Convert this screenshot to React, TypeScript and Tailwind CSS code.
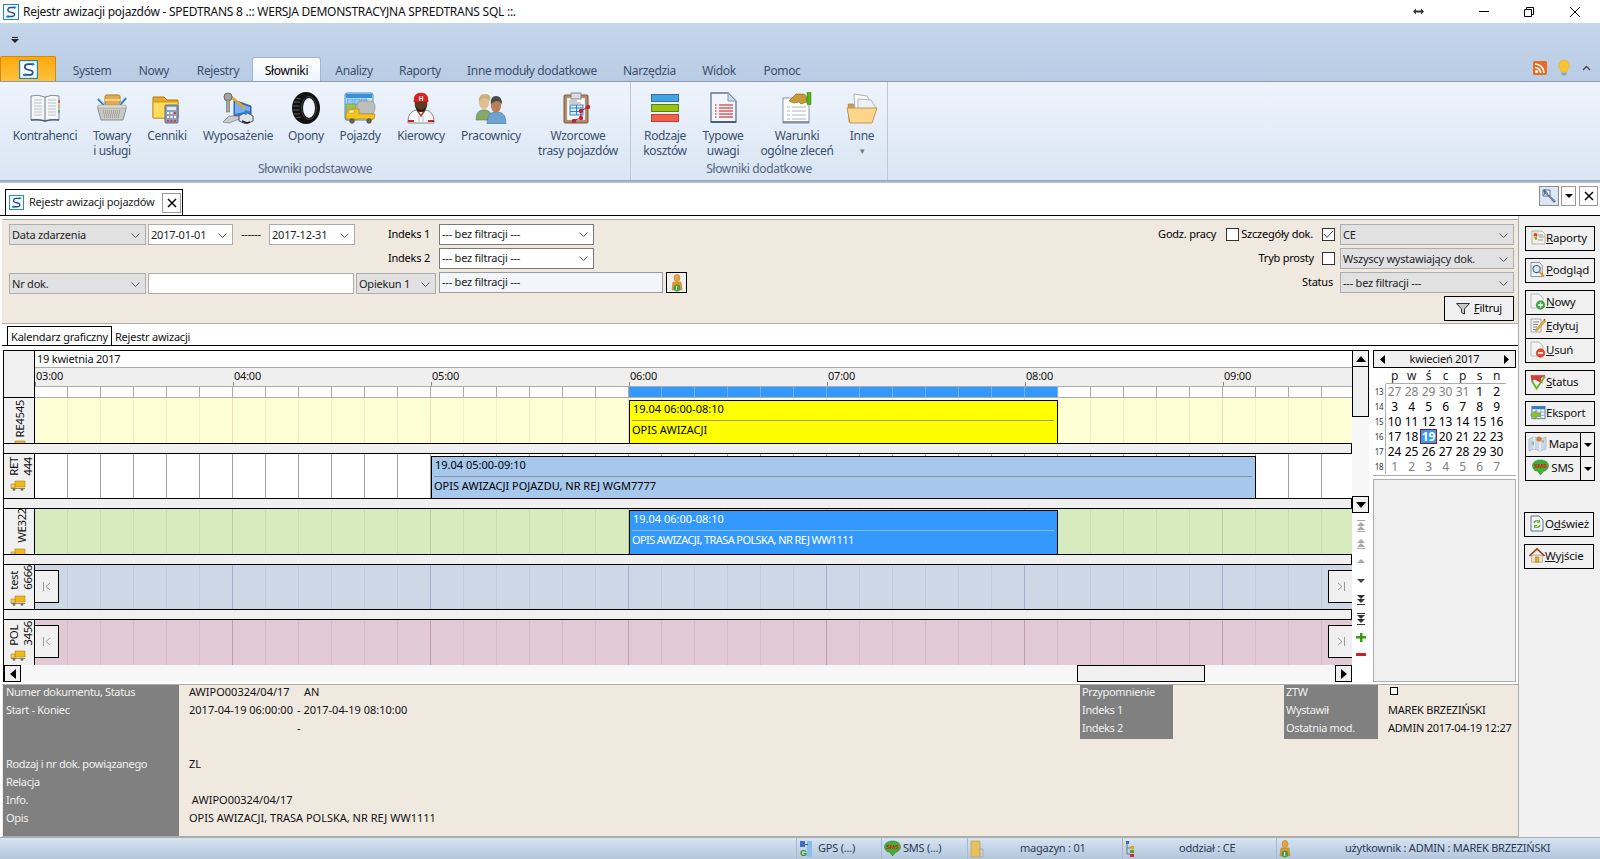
import type { ReactNode } from 'react';

// --- ikony ---
const LogoS = ({ size = 16 }: { size?: number }) => (
  <svg width={size} height={size} viewBox="0 0 16 16" className="shrink-0">
    <rect x="0.5" y="0.5" width="15" height="15" fill="#f4fafe" stroke="#1c86c6" />
    <path d="M12.5 3.5H7.5C4.5 3.5 4 7 6.5 7.8l3.5 1c2.5 .7 2 3.7-1 3.7H3.5" fill="none" stroke="#234f8c" strokeWidth="1.4" />
    <path d="M11 2l2.5 1.5L11 5zM5.5 11L3 12.5 5.5 14z" fill="#1c86c6" />
  </svg>
);

const BookIcon = () => (
  <svg width="32" height="32" viewBox="0 0 32 32">
    <path d="M2 4q7-2 14 1q7-3 14-1v24q-7-1-14 1q-7-2-14-1z" fill="#f4f6f8" stroke="#7f8ea0" />
    <path d="M16 5v24" stroke="#6f7d8d" />
    <path d="M5 8h8M5 11h8M5 14h8M5 17h8M5 20h8M5 23h8M19 8h8M19 11h8M19 14h8M19 17h8M19 20h8M19 23h8" stroke="#b9c1ca" />
    <path d="M30 8v3" stroke="#d9534f" strokeWidth="1.5" />
    <path d="M30 13v3" stroke="#e0b030" strokeWidth="1.5" />
    <path d="M30 18v3" stroke="#66a63a" strokeWidth="1.5" />
    <path d="M2 28q7-1 14 1q7-2 14-1" fill="none" stroke="#4e6278" strokeWidth="1.5" />
  </svg>
);

const BasketIcon = () => (
  <svg width="32" height="32" viewBox="0 0 32 32">
    <rect x="9" y="3" width="15" height="11" rx="1.5" fill="#e7a94a" stroke="#b37b2a" />
    <rect x="9" y="7" width="15" height="2" fill="#f6d792" />
    <path d="M2 7l8 8M30 6l-8 9" stroke="#2a7fd0" strokeWidth="2.4" />
    <path d="M3 7l8 8M29 6l-8 9" stroke="#bfe0f8" strokeWidth="0.7" />
    <path d="M2 14h28v3l-3 11H5L2 17z" fill="#c8c8c4" stroke="#8d8d88" />
    <rect x="2" y="13" width="28" height="3" rx="1" fill="#dededa" stroke="#9a9a95" strokeWidth="0.6" />
    <path d="M7 19h18M7 21h18M8 23h16M8 25h16" stroke="#85857f" strokeDasharray="1 1" />
  </svg>
);

const FolderCalcIcon = () => (
  <svg width="32" height="32" viewBox="0 0 32 32">
    <path d="M2 5h11l3 3h11v18H2z" fill="#e8a81f" stroke="#b07d16" />
    <path d="M2 10h25v16H3q-1 0-1-1z" fill="#ffdc5e" stroke="#c79a26" />
    <rect x="14" y="13" width="13" height="18" rx="1" fill="#8f9fb7" stroke="#5e6e88" />
    <rect x="16" y="15" width="9" height="3" fill="#dfe9f7" />
    <path d="M16 20h2v2h-2zM19.5 20h2v2h-2zM16 24h2v2h-2zM19.5 24h2v2h-2zM23 24h2v2h-2z" fill="#fff" />
    <path d="M23 20h2v2h-2zM16 28h2v2h-2zM19.5 28h2v2h-2zM23 28h2v2h-2z" fill="#d24040" />
  </svg>
);

const EquipIcon = () => (
  <svg width="32" height="32" viewBox="0 0 32 32">
    <path d="M12 8l17 6v12H12z" fill="#2f6fd6" stroke="#3b5f9f" />
    <path d="M13 10l15 5v4l-15 3z" fill="#79aef0" />
    <path d="M8 4l15 12" stroke="#e6a52a" strokeWidth="2.6" />
    <circle cx="6" cy="5" r="4" fill="#a6a6a0" stroke="#6a6a65" />
    <rect x="4.5" y="8" width="3" height="12" fill="#a6a6a0" stroke="#6a6a65" strokeWidth="0.6" />
    <path d="M1 30l6-6h10v3l-10 4z" fill="#c8cbd0" stroke="#6a6a65" strokeWidth="0.6" />
    <path d="M17 24l7-4 7 4v5l-7 3-7-3z" fill="#dfe3e8" stroke="#555" />
    <path d="M20 21l4-3 3 2-3 3z" fill="#2f7fd6" />
    <path d="M20 29l5 2 3-1" stroke="#222" strokeWidth="1.4" fill="none" />
  </svg>
);

const TireIcon = () => (
  <svg width="32" height="32" viewBox="0 0 32 32">
    <ellipse cx="16" cy="16" rx="14" ry="16" fill="#111" />
    <ellipse cx="19" cy="16" rx="6" ry="10" fill="#f0f5fb" />
    <ellipse cx="19" cy="16" rx="7.5" ry="11.5" fill="none" stroke="#444" />
    <path d="M3 10h7M2.5 14h7M2.5 18h7M3 22h7M5 6l6 1M5 26l6-1" stroke="#5c5c5c" />
  </svg>
);

const VehicleIcon = () => (
  <svg width="32" height="32" viewBox="0 0 32 32">
    <rect x="1" y="1" width="28" height="27" rx="2" fill="#cfe6f7" stroke="#3c8fd2" />
    <path d="M2 2h26v4H2z" fill="#3c8fd2" />
    <path d="M3 7h6v6H3zM10 7h6v6h-6zM17 7h6v6h-6z" fill="#8fc8f0" stroke="#3c8fd2" strokeWidth="0.5" />
    <rect x="2" y="12" width="10" height="16" fill="#9dc45a" stroke="#6d8f33" strokeWidth="0.6" />
    <rect x="13" y="9" width="18" height="13" rx="5" fill="#bdbdbb" stroke="#8c8c8a" strokeWidth="0.6" />
    <path d="M10 17h5v5h16l-1 5H2v-6l3-4z" fill="#f6c21c" stroke="#b98b10" strokeWidth="0.7" />
    <path d="M4 21l2-3h4v3z" fill="#fff3c0" stroke="#b98b10" strokeWidth="0.5" />
    <circle cx="8" cy="29" r="2.3" fill="#666" stroke="#333" strokeWidth="0.6" />
    <circle cx="25" cy="29" r="2.3" fill="#666" stroke="#333" strokeWidth="0.6" />
  </svg>
);

const DriverIcon = () => (
  <svg width="32" height="32" viewBox="0 0 32 32">
    <path d="M3 29q0-9 8-11h10q8 2 8 11v2H3z" fill="#fafafa" stroke="#8b8b8b" />
    <path d="M3 28h6v2H3zM23 28h6v2h-6z" fill="#c9261e" />
    <path d="M12 18l4 6 4-6" fill="none" stroke="#9c3a32" strokeWidth="1.4" />
    <path d="M14 24v6M18 24v6" stroke="#bbb" />
    <ellipse cx="16" cy="12" rx="6.4" ry="7.5" fill="#5b3a26" />
    <path d="M11 15q5 6 10 0q0 5-5 5t-5-5z" fill="#2a1a10" />
    <path d="M9 8q0-7 7-7t7 7v2H9z" fill="#dd1f1f" stroke="#a21212" strokeWidth="0.5" />
    <text x="16" y="8.5" textAnchor="middle" fontSize="6.5" fontWeight="700" fill="#fff" fontFamily="'Liberation Sans',sans-serif">H</text>
  </svg>
);

const PeopleIcon = () => (
  <svg width="32" height="32" viewBox="0 0 32 32">
    <path d="M1 28q0-9 6-10h4q6 1 6 10z" fill="#86a86b" stroke="#5f7d4c" strokeWidth="0.6" />
    <ellipse cx="9" cy="10" rx="5.2" ry="7" fill="#e0c090" />
    <path d="M4 10q-1-8 6-8t5 7q-3-3-6-3t-5 4z" fill="#c7b27a" />
    <path d="M12 32q0-11 7-12h5q7 1 7 12z" fill="#6ea3d0" stroke="#4a779d" strokeWidth="0.6" />
    <ellipse cx="21" cy="13" rx="5.2" ry="7.4" fill="#b78155" />
    <path d="M16 12q-1-8 5-8t6 8q-3-3-5-3t-6 3z" fill="#4a4a48" />
  </svg>
);

const ClipboardIcon = () => (
  <svg width="32" height="32" viewBox="0 0 32 32">
    <rect x="2" y="3" width="24" height="28" rx="1" fill="#b08862" stroke="#7b5a3c" />
    <rect x="5" y="6" width="18" height="22" fill="#fff" stroke="#bbb" strokeWidth="0.5" />
    <rect x="9" y="1" width="10" height="6" fill="#d9dde2" stroke="#7f8790" />
    <path d="M7 9h8M7 11h12" stroke="#999" />
    <rect x="8" y="13" width="13" height="10" fill="#dcecf9" stroke="#2d81cd" />
    <path d="M8 16h13M8 19.5h13M14.5 13v10" stroke="#2d81cd" />
    <path d="M26 15l-7 4M19 19v7M19 26l-6 2" stroke="#8a2a4a" />
    <circle cx="26" cy="15" r="2.2" fill="#c91f38" />
    <circle cx="19" cy="19" r="2.2" fill="#c91f38" />
    <circle cx="19" cy="26" r="2.2" fill="#c91f38" />
    <circle cx="12" cy="29" r="2.2" fill="#c91f38" />
  </svg>
);

const BarsIcon = () => (
  <svg width="32" height="32" viewBox="0 0 32 32">
    <rect x="2.5" y="2.5" width="27" height="7" fill="#41a4e6" stroke="#3b6ea0" />
    <rect x="2.5" y="12.5" width="27" height="7" fill="#9bc411" stroke="#5e7f17" />
    <rect x="2.5" y="22.5" width="27" height="7" fill="#f2604a" stroke="#b64435" />
  </svg>
);

const DocLinesIcon = () => (
  <svg width="32" height="32" viewBox="0 0 32 32">
    <path d="M4 1h17l8 8v21H4z" fill="#f2f5f9" stroke="#5d7591" strokeWidth="1.3" />
    <path d="M21 1v8h8z" fill="#cfd8e3" stroke="#8097af" />
    <path d="M4 30h25" stroke="#4b5f78" strokeWidth="2" />
    <path d="M12 13h14M12 16h14M12 19h14M12 22h14M12 25h14" stroke="#c61010" />
    <path d="M8 13h2M8 16h2M8 19h2M8 22h2M8 25h2" stroke="#c61010" strokeDasharray="1 0.5" />
  </svg>
);

const TermsIcon = () => (
  <svg width="32" height="32" viewBox="0 0 32 32">
    <rect x="2" y="6" width="26" height="25" fill="#fff" stroke="#8397ad" />
    <path d="M2 30h26" stroke="#66788f" strokeWidth="1.5" />
    <path d="M6 15h3M11 15h14M6 19h3M11 19h14M6 23h3M11 23h14M6 27h3M11 27h14" stroke="#a9b6c6" />
    <path d="M8 9l7-7h8l2 2 1 6-6 2-2-2-5 1z" fill="#c89a35" stroke="#8a6516" strokeWidth="0.6" />
    <rect x="26" y="0.5" width="4" height="12" fill="#4fb51d" stroke="#2f7a0e" strokeWidth="0.5" />
  </svg>
);

const OpenFolderIcon = () => (
  <svg width="32" height="32" viewBox="0 0 32 32">
    <path d="M2 12h7V6h5l2 2v4h10v18H3z" fill="#c89a55" stroke="#a87c3d" strokeWidth="0.6" />
    <path d="M8 2l13 2 6 10-18 4z" fill="#fbfbfb" stroke="#a9afb6" />
    <path d="M12 7l13 1 5 8-18 2z" fill="#eef1f5" stroke="#b4b9c0" />
    <path d="M1 16h30l-5 15H4z" fill="#fbd58a" stroke="#c0975a" />
  </svg>
);

const Truck = () => (
  <svg width="16" height="11" viewBox="0 0 16 11" className="shrink-0">
    <path d="M5 1h10v6H5z" fill="#f0b919" stroke="#ad8210" strokeWidth="0.6" />
    <path d="M1 4h4v4H1z" fill="#f6cf4e" stroke="#ad8210" strokeWidth="0.6" />
    <path d="M1 8h14v1H1z" fill="#9b8a5a" />
    <circle cx="4" cy="9.5" r="1.4" fill="#777" />
    <circle cx="12" cy="9.5" r="1.4" fill="#777" />
  </svg>
);

const CloseX = () => (
  <svg width="10" height="10" viewBox="0 0 10 10">
    <path d="M1 1l8 8M9 1L1 9" stroke="#000" strokeWidth="1.5" />
  </svg>
);

const Chevron = ({ className = 'text-[#555]' }: { className?: string }) => (
  <svg width="9" height="5" viewBox="0 0 9 5" className={`shrink-0 ${className}`}>
    <path d="M0.5 0.5L4.5 4.5L8.5 0.5" fill="none" stroke="currentColor" />
  </svg>
);

const TriDown = () => (
  <svg width="8" height="4" viewBox="0 0 8 4" className="shrink-0">
    <path d="M0 0h8L4 4z" fill="#000" />
  </svg>
);

const Person = () => (
  <svg width="12" height="18" viewBox="0 0 12 18" className="shrink-0">
    <ellipse cx="6" cy="4" rx="3" ry="3.6" fill="#eaa33a" stroke="#b0741e" strokeWidth="0.5" />
    <path d="M2 8h8l1 8H1z" fill="#e5982f" stroke="#b0741e" strokeWidth="0.5" />
    <circle cx="6" cy="14" r="3.4" fill="#3fa33a" />
    <path d="M5.6 12v4" stroke="#fff" />
  </svg>
);

const SmsBubble = ({ size = 18 }: { size?: number }) => (
  <svg width={size} height={size} viewBox="0 0 18 18" className="shrink-0">
    <path d="M9 1c5 0 8.5 2.5 8.5 6s-3 6-5 6L9 17l-3-4c-3 0-5.5-2.500-5.5-6S4 1 9 1z" fill="#3fae3a" stroke="#2a7f26" strokeWidth="0.5" />
    <text x="9" y="9.5" textAnchor="middle" fontSize="6.5" fontWeight="700" fill="#e01414" fontFamily="'Liberation Sans',sans-serif">SMS</text>
  </svg>
);

const sideIcons: Record<string, ReactNode> = {
  raporty: (
    <svg width="15" height="15" viewBox="0 0 15 15">
      <path d="M1 1h10l3 3v10H1z" fill="#f4f1ea" stroke="#b3b0a6" />
      <path d="M7 5h5M8 7h5M7 10h5" stroke="#999" />
      <circle cx="4.5" cy="5" r="2" fill="#e33b2e" />
      <circle cx="4" cy="7" r="1.3" fill="#f2c030" />
      <circle cx="5" cy="8.5" r="1.3" fill="#5ab030" />
    </svg>
  ),
  podglad: (
    <svg width="17" height="17" viewBox="0 0 17 17">
      <path d="M1 1h9l3 3v12H1z" fill="#eef2f6" stroke="#7c8ea0" />
      <circle cx="7" cy="8" r="3.8" fill="#dbe9f5" stroke="#4b5f78" strokeWidth="1.2" />
      <path d="M10 11l5 5" stroke="#d99a2c" strokeWidth="2.2" />
    </svg>
  ),
  nowy: (
    <svg width="16" height="17" viewBox="0 0 16 17">
      <path d="M1 1h8l4 4v10H1z" fill="#f2f3f5" stroke="#b8bcc2" />
      <circle cx="10.5" cy="12" r="4.3" fill="#3fa33a" stroke="#2a7f26" strokeWidth="0.5" />
      <path d="M10.5 9.5v5M8 12h5" stroke="#fff" strokeWidth="1.4" />
    </svg>
  ),
  edytuj: (
    <svg width="16" height="17" viewBox="0 0 16 17">
      <path d="M1 2h10v13H1z" fill="#f2f3f5" stroke="#a8a8a8" />
      <path d="M3 5h6M3 7.5h5M3 10h4M3 12.5h3" stroke="#8a8a8a" />
      <path d="M6 12l8-9 1.5 1.5-8 9-2 .5z" fill="#e8b536" stroke="#9a7418" strokeWidth="0.5" />
      <path d="M13.5 3l1-1.500 1.200 1.500-1 1z" fill="#d83a30" />
    </svg>
  ),
  usun: (
    <svg width="16" height="17" viewBox="0 0 16 17">
      <path d="M1 1h8l4 4v10H1z" fill="#f2f3f5" stroke="#b8bcc2" />
      <circle cx="10.5" cy="12" r="4.3" fill="#e2492f" stroke="#a93320" strokeWidth="0.5" />
      <path d="M8 12h5" stroke="#fff" strokeWidth="1.6" />
    </svg>
  ),
  status: (
    <svg width="17" height="17" viewBox="0 0 17 17">
      <path d="M1 2l15 0-5 3 2 5-8-4-3 2z" fill="#d93a3a" stroke="#8f2020" strokeWidth="0.5" />
      <path d="M2 8l5 8 9-13" fill="none" stroke="#6ab42e" strokeWidth="2" />
    </svg>
  ),
  eksport: (
    <svg width="17" height="16" viewBox="0 0 17 16">
      <rect x="2" y="1" width="14" height="13" fill="#f2f6fb" stroke="#4a7ab2" />
      <path d="M2 1h14v3H2z" fill="#3a79c4" />
      <path d="M7 4v10M2 7h14M2 10.5h14M11.5 4v10" stroke="#8cb0d6" />
      <path d="M0.5 10L6 5.5V8h5v4H6v2.5z" fill="#90c12e" stroke="#5b8a14" strokeWidth="0.5" />
    </svg>
  ),
  mapa: (
    <svg width="19" height="17" viewBox="0 0 19 17">
      <path d="M1 4l5-2 6 2 6-2v12l-6 2-6-2-5 2z" fill="#c7d8e8" stroke="#95a8ba" strokeWidth="0.6" />
      <path d="M6 2v12M12 4v12" stroke="#fff" />
      <path d="M3 8l3-2v5zM13 6l3-1v3z" fill="#98b87a" />
      <circle cx="11" cy="4" r="2.6" fill="#d97a3a" />
    </svg>
  ),
  odswiez: (
    <svg width="14" height="17" viewBox="0 0 14 17">
      <path d="M1 1h8l4 4v11H1z" fill="#f2f5f9" stroke="#5d7591" />
      <path d="M4 8a3 3 0 0 1 5-1.5M10 10a3 3 0 0 1-5 1.5" fill="none" stroke="#6aa82e" strokeWidth="1.3" />
      <path d="M9.5 5v2.5H7M4.5 13v-2.5H7" fill="none" stroke="#6aa82e" />
    </svg>
  ),
  wyjscie: (
    <svg width="18" height="17" viewBox="0 0 18 17">
      <path d="M3 8h12v8H3z" fill="#efe8d8" stroke="#8a7a5a" strokeWidth="0.6" />
      <path d="M0.5 9L9 1l8.5 8" fill="none" stroke="#8c4a1e" strokeWidth="1.8" />
      <path d="M7 10h4v6H7z" fill="#e4a92c" stroke="#9a7418" strokeWidth="0.5" />
    </svg>
  ),
};

// --- wstazka ---
const tabs = [
  { label: 'System', w: 'w-[64px]' },
  { label: 'Nowy', w: 'w-[60px]' },
  { label: 'Rejestry', w: 'w-[68px]' },
  { label: 'Słowniki', w: 'w-[69px]', active: true },
  { label: 'Analizy', w: 'w-[66px]' },
  { label: 'Raporty', w: 'w-[66px]' },
  { label: 'Inne moduły dodatkowe', w: 'w-[158px]' },
  { label: 'Narzędzia', w: 'w-[77px]' },
  { label: 'Widok', w: 'w-[62px]' },
  { label: 'Pomoc', w: 'w-[64px]' },
];

const mainItems = [
  { icon: <BookIcon />, lines: ['Kontrahenci'], w: 'w-[74px]' },
  { icon: <BasketIcon />, lines: ['Towary', 'i usługi'], w: 'w-[60px]' },
  { icon: <FolderCalcIcon />, lines: ['Cenniki'], w: 'w-[50px]' },
  { icon: <EquipIcon />, lines: ['Wyposażenie'], w: 'w-[92px]' },
  { icon: <TireIcon />, lines: ['Opony'], w: 'w-[44px]' },
  { icon: <VehicleIcon />, lines: ['Pojazdy'], w: 'w-[64px]' },
  { icon: <DriverIcon />, lines: ['Kierowcy'], w: 'w-[58px]' },
  { icon: <PeopleIcon />, lines: ['Pracownicy'], w: 'w-[82px]' },
  { icon: <ClipboardIcon />, lines: ['Wzorcowe', 'trasy pojazdów'], w: 'w-[92px]' },
];

const extraItems = [
  { icon: <BarsIcon />, lines: ['Rodzaje', 'kosztów'], w: 'w-[60px]' },
  { icon: <DocLinesIcon />, lines: ['Typowe', 'uwagi'], w: 'w-[56px]' },
  { icon: <TermsIcon />, lines: ['Warunki', 'ogólne zleceń'], w: 'w-[92px]' },
  { icon: <OpenFolderIcon />, lines: ['Inne', '▾'], w: 'w-[38px]' },
];

function RibbonItem({ icon, lines, w }: { icon: ReactNode; lines: string[]; w: string }) {
  return (
    <div className={`flex flex-col items-center ${w}`}>
      <div className="h-[33px]">{icon}</div>
      <div className="mt-[3px] text-center text-[12px] leading-[15px] tracking-[-0.35px] whitespace-nowrap text-[#3d4f6b]">
        {lines.map((l) => (
          <div key={l} className={l === '▾' ? 'text-[9px] text-[#777]' : ''}>
            {l}
          </div>
        ))}
      </div>
    </div>
  );
}

function Ribbon() {
  return (
    <div className="flex h-[160px] shrink-0 flex-col">
      <div className="flex h-[58px] flex-col bg-linear-to-b from-[#c5d6ea] to-[#b8cce5]">
        <div className="flex h-[33px] items-center pl-[11px]">
          <svg width="8" height="6" viewBox="0 0 8 6">
            <path d="M1 0h6v1H1zM0 2h8L4 6z" fill="#222" />
          </svg>
        </div>
        <div className="flex h-[25px] items-end">
          <div className="mr-[4px] flex h-[25px] w-[56px] items-center justify-center rounded-t-[2px] border border-b-0 border-[#d08a10] bg-linear-to-b from-[#ffa800] to-[#ffc23a]">
            <LogoS size={19} />
          </div>
          {tabs.map((t) => (
            <div
              key={t.label}
              className={`flex h-[24px] items-center justify-center pt-[3px] text-[12px] tracking-[-0.35px] whitespace-nowrap ${t.w} ${
                t.active
                  ? 'rounded-t-[3px] border border-b-0 border-[#a5b5c9] bg-linear-to-b from-white to-[#eef4fc] text-black'
                  : 'text-[#3d4f6b]'
              }`}
            >
              {t.label}
            </div>
          ))}
          <div className="ml-auto flex h-[24px] items-start">
            <svg width="14" height="14" viewBox="0 0 14 14" className="mr-[11px] mt-[4px]">
              <rect width="14" height="14" rx="1.5" fill="#ec6a1e" />
              <circle cx="3.5" cy="10.5" r="1.5" fill="#fff" />
              <path d="M2 6.5a5.5 5.5 0 0 1 5.5 5.5M2 3a9 9 0 0 1 9 9" fill="none" stroke="#fff" strokeWidth="1.7" />
            </svg>
            <svg width="12" height="16" viewBox="0 0 12 16" className="mr-[12px] mt-[3px]">
              <path d="M6 0a5.5 5.5 0 0 1 3 10v2H3v-2A5.5 5.5 0 0 1 6 0z" fill="#fbc531" stroke="#e2a61a" strokeWidth="0.5" />
              <path d="M3.5 12.5h5v2l-1.5 1h-2l-1.5-1z" fill="#8ea3bb" />
            </svg>
            <svg width="9" height="6" viewBox="0 0 9 6" className="mr-[9px] mt-[8px]">
              <path d="M1 5l3.5-3.5L8 5" fill="none" stroke="#444" strokeWidth="1.3" />
            </svg>
          </div>
        </div>
      </div>
      <div className="h-px bg-[#8a9bb0]" />
      <div className="flex h-[98px] bg-linear-to-b from-[#eef4fd] to-[#d9e5f3]">
        <div className="flex h-full w-[631px] flex-col border-r border-[#bcc9d8] pt-[10px]">
          <div className="flex flex-1 pl-[8px]">
            {mainItems.map((i) => (
              <RibbonItem key={i.lines[0]} {...i} />
            ))}
          </div>
          <div className="pb-[4px] text-center text-[12px] leading-[15px] tracking-[-0.35px] text-[#56667f]">Słowniki podstawowe</div>
        </div>
        <div className="flex h-full w-[257px] flex-col border-r border-[#bcc9d8] pt-[10px]">
          <div className="flex flex-1 pl-[4px]">
            {extraItems.map((i) => (
              <RibbonItem key={i.lines[0]} {...i} />
            ))}
          </div>
          <div className="pb-[4px] text-center text-[12px] leading-[15px] tracking-[-0.35px] text-[#56667f]">Słowniki dodatkowe</div>
        </div>
      </div>
      <div className="h-[3px] bg-linear-to-b from-[#8fa2b8] to-[#b9c8d9]" />
    </div>
  );
}

function DocStrip() {
  return (
    <div className="flex h-[33px] shrink-0 items-end border-b border-black bg-white pl-[5px]">
      <div className="flex h-[26px] w-[178px] items-center border border-b-0 border-black pl-[3px] pr-[1px]">
        <LogoS size={15} />
        <span className="ml-[5px] flex-1 text-[11px] whitespace-nowrap text-[#222]">Rejestr awizacji pojazdów</span>
        <div className="flex h-[20px] w-[19px] items-center justify-center border border-[#999]">
          <CloseX />
        </div>
      </div>
      <div className="mb-[9px] ml-auto flex items-center gap-[2px] pr-[2px]">
        <div className="flex h-[20px] w-[20px] items-center justify-center border border-[#8a8a8a] bg-[#dde6f4]">
          <svg width="16" height="16" viewBox="0 0 16 16">
            <path d="M2 2h7v6H2z" fill="#f4f7fb" stroke="#4a6aa0" />
            <path d="M4 1.5a3 3 0 0 0 2 5l7 8 1.5-1.5-8-7a3 3 0 0 0-4-3l2 2-1 1.5z" fill="#7d8ea8" stroke="#46566f" strokeWidth="0.6" />
          </svg>
        </div>
        <div className="flex h-[20px] w-[15px] items-center justify-center border border-[#999]">
          <TriDown />
        </div>
        <div className="ml-[1px] flex h-[20px] w-[19px] items-center justify-center border border-[#999]">
          <CloseX />
        </div>
      </div>
    </div>
  );
}

// --- filtry ---
function Select({ label, w, tone = 'gray' }: { label: string; w: string; tone?: 'gray' | 'white' | 'dark' | 'pale' }) {
  const toneClass = {
    gray: 'bg-[#e1e1e1] border-[#adadad] pt-[1px]',
    white: 'bg-white border-[#adadad] pt-[1px]',
    dark: 'bg-white border-[#7a7a7a]',
    pale: 'bg-[#f2f6fb] border-[#9a9a9a]',
  }[tone];
  return (
    <div className={`flex h-[21px] shrink-0 items-center justify-between border pl-[2px] pr-[5px] ${w} ${toneClass}`}>
      <span className="text-[11px] whitespace-nowrap text-[#222]">{label}</span>
      {tone !== 'pale' && <Chevron />}
    </div>
  );
}

const CheckBox = ({ checked }: { checked?: boolean }) => (
  <div className="flex h-[13px] w-[13px] shrink-0 items-center justify-center border border-[#333] bg-white">
    {checked && (
      <svg width="11" height="9" viewBox="0 0 11 9">
        <path d="M1 4l3 3.5L10 1" fill="none" stroke="#444" />
      </svg>
    )}
  </div>
);

function Filters() {
  return (
    <div className="h-[105px] shrink-0 border-y border-[#adadad] bg-[#f0e9e0] pl-[7px] pr-[4px] pt-[4px]">
      <div className="flex h-[21px] items-center">
        <Select label="Data zdarzenia" w="w-[137px]" />
        <div className="ml-[2px]"><Select label="2017-01-01" w="w-[85px]" tone="white" /></div>
        <span className="w-[36px] pl-[8px] text-[11px]">------</span>
        <Select label="2017-12-31" w="w-[86px]" tone="white" />
        <span className="w-[75px] text-right text-[11px]">Indeks 1</span>
        <div className="ml-[9px]"><Select label="--- bez filtracji ---" w="w-[155px]" tone="dark" /></div>
        <div className="ml-auto flex items-center">
          <span className="text-[11px]">Godz. pracy</span>
          <div className="ml-[10px]"><CheckBox /></div>
          <span className="ml-[2px] text-[11px]">Szczegóły dok.</span>
          <div className="ml-[9px] mr-[5px]"><CheckBox checked /></div>
          <Select label="CE" w="w-[174px]" />
        </div>
      </div>
      <div className="mt-[3px] flex h-[21px] items-center">
        <span className="w-[421px] text-right text-[11px]">Indeks 2</span>
        <div className="ml-[9px]"><Select label="--- bez filtracji ---" w="w-[155px]" tone="dark" /></div>
        <div className="ml-auto flex items-center">
          <span className="text-[11px]">Tryb prosty</span>
          <div className="ml-[8px] mr-[5px]"><CheckBox /></div>
          <Select label="Wszyscy wystawiający dok." w="w-[174px]" />
        </div>
      </div>
      <div className="mt-[3px] flex h-[22px] items-start">
        <div className="mt-[1px]"><Select label="Nr dok." w="w-[137px]" /></div>
        <div className="ml-[2px] mt-[1px] h-[21px] w-[206px] border border-[#adadad] bg-white" />
        <div className="ml-[2px] mt-[1px]"><Select label="Opiekun 1" w="w-[80px]" /></div>
        <div className="ml-[3px]"><Select label="--- bez filtracji ---" w="w-[224px]" tone="pale" /></div>
        <div className="ml-[3px] flex h-[21px] w-[21px] items-center justify-center border border-black bg-[#f0f0f0]">
          <Person />
        </div>
        <div className="ml-auto flex h-[21px] items-center">
          <span className="mr-[7px] text-[11px]">Status</span>
          <Select label="--- bez filtracji ---" w="w-[174px]" />
        </div>
      </div>
      <div className="mt-[2px] flex justify-end">
        <div className="flex h-[25px] w-[70px] items-center justify-center gap-[4px] border border-black bg-[#f0f0f0] text-[11px]">
          <svg width="14" height="12" viewBox="0 0 14 12">
            <path d="M0.5 0.5h13L8.5 6v5l-3-1.5V6z" fill="#c9c9c9" stroke="#333" />
          </svg>
          <span><u>F</u>iltruj</span>
        </div>
      </div>
    </div>
  );
}

// --- kalendarz graficzny ---
const cellIdx = Array.from({ length: 40 }, (_, i) => i);

const rowTones = {
  yellow: { bg: 'bg-[#ffffd5]', line: 'border-[#f5eccb]', hour: 'border-[#f1dcb4]' },
  white: { bg: 'bg-white', line: 'border-[#a0a0a0]', hour: 'border-[#a0a0a0]' },
  green: { bg: 'bg-[#d6ecbe]', line: 'border-[#c7deb0]', hour: 'border-[#b5d19c]' },
  blue: { bg: 'bg-[#cdd7e6]', line: 'border-[#bfcbde]', hour: 'border-[#9fb0d0]' },
  pink: { bg: 'bg-[#e2cad5]', line: 'border-[#d6bcc8]', hour: 'border-[#c19da6]' },
};

type Tone = keyof typeof rowTones;

type RowDef = {
  tone: Tone;
  lines: string[];
  labelH: string;
  labelX: string;
  truckGap: string;
  rowH: string;
  pager?: boolean;
  event?: ReactNode;
};

const EventBox = ({
  pos,
  bg,
  text,
  rule,
  range,
  title,
  titleClass = 'tracking-normal',
}: {
  pos: string;
  bg: string;
  text: string;
  rule: string;
  range: string;
  title: string;
  titleClass?: string;
}) => (
  <div className={`absolute bottom-0 flex flex-col border border-b-0 border-black pl-[2px] text-[11px] ${pos} ${bg} ${text}`}>
    <div className={`mr-[3px] h-[20px] border-b leading-[16px] tracking-normal ${rule}`}>
      <span className="pl-[1px]">{range}</span>
    </div>
    <div className={`leading-[17px] whitespace-nowrap ${titleClass}`}>{title}</div>
  </div>
);

const rows: RowDef[] = [
  {
    tone: 'yellow',
    lines: ['RE4545'],
    labelH: 'h-[39px]',
    labelX: 'pl-[9px]',
    truckGap: 'mt-[3px]',
    rowH: 'h-[46px]',
    event: (
      <EventBox
        pos="left-[594px] top-[2px] w-[429px]"
        bg="bg-[#ffff00]"
        text="text-black"
        rule="border-[#9a9a60]"
        range="19.04 06:00-08:10"
        title="OPIS AWIZACJI"
      />
    ),
  },
  {
    tone: 'white',
    lines: ['RET', '444'],
    labelH: 'h-[22px]',
    labelX: 'pl-[3px]',
    truckGap: 'mt-[4px]',
    rowH: 'h-[45px]',
    event: (
      <EventBox
        pos="left-[396px] top-[2px] w-[825px]"
        bg="bg-[#a6c8ec]"
        text="text-black"
        rule="border-[#8a8f98]"
        range="19.04 05:00-09:10"
        title="OPIS AWIZACJI POJAZDU, NR REJ WGM7777"
      />
    ),
  },
  {
    tone: 'green',
    lines: ['WE322'],
    labelH: 'h-[34px]',
    labelX: 'pl-[11px]',
    truckGap: 'mt-[5px]',
    rowH: 'h-[46px]',
    event: (
      <EventBox
        pos="left-[594px] top-[1px] w-[429px]"
        bg="bg-[#3399ff]"
        text="text-white"
        rule="border-[#7db8f0]"
        range="19.04 06:00-08:10"
        title="OPIS AWIZACJI, TRASA POLSKA, NR REJ WW1111"
        titleClass="tracking-[-0.6px]"
      />
    ),
  },
  { tone: 'blue', lines: ['test', '6666'], labelH: 'h-[25px]', labelX: 'pl-[3px]', truckGap: 'mt-[5px]', rowH: 'h-[45px]', pager: true },
  { tone: 'pink', lines: ['POL', '3456'], labelH: 'h-[26px]', labelX: 'pl-[3px]', truckGap: 'mt-[4px]', rowH: 'h-[45px]', pager: true },
];

function PagerBtn({ dir }: { dir: 'first' | 'last' }) {
  return (
    <div
      className={`absolute top-[5px] z-10 flex h-[33px] w-[24px] items-center justify-center border-y border-black bg-[#f0f0f0] ${
        dir === 'first' ? 'left-0 border-r' : 'right-0 border-l'
      }`}
    >
      <svg width="8" height="9" viewBox="0 0 8 9">
        <path d={dir === 'first' ? 'M0.5 0v9M7 1L3 4.5 7 8' : 'M7.5 0v9M1 1l4 3.5L1 8'} fill="none" stroke="#9a9a9a" />
      </svg>
    </div>
  );
}

function CalendarRow({ row, last }: { row: RowDef; last: boolean }) {
  const tone = rowTones[row.tone];
  return (
    <div className={`flex shrink-0 ${row.rowH} ${last ? '' : 'border-b border-black'}`}>
      <div className="flex w-[31px] shrink-0 flex-col overflow-hidden border-r border-black bg-[#f0f0f0]">
        <div className={`flex shrink-0 items-end overflow-hidden ${row.labelH} ${row.labelX}`}>
          <div className="rotate-180 text-[11.5px] leading-[14px] tracking-[-0.4px] whitespace-nowrap text-[#111] [writing-mode:vertical-rl]">
            {row.lines.map((l) => (
              <div key={l}>{l}</div>
            ))}
          </div>
        </div>
        <div className={`pl-[6px] ${row.truckGap}`}>
          <Truck />
        </div>
      </div>
      <div className={`relative flex flex-1 overflow-hidden ${tone.bg}`}>
        {cellIdx.map((i) => (
          <div key={i} className={`h-full w-[33px] shrink-0 border-r ${(i + 1) % 6 === 0 ? tone.hour : tone.line}`} />
        ))}
        {row.pager && <PagerBtn dir="first" />}
        {row.pager && <PagerBtn dir="last" />}
        {row.event}
      </div>
    </div>
  );
}

const RowGap = () => <div className="h-[10px] shrink-0 border-b border-r border-black bg-[#f0f0f0]" />;

const hourLabels = ['03:00', '04:00', '05:00', '06:00', '07:00', '08:00', '09:00'];

function Timeline() {
  return (
    <div className="flex h-[332px] w-[1349px] shrink-0 flex-col overflow-hidden border-l border-black">
      <div className="flex h-[48px] shrink-0 border-t border-black">
        <div className="w-[30px] shrink-0 border-b border-black bg-[#f0f0f0]" />
        <div className="flex flex-1 flex-col overflow-hidden border-l border-black">
          <div className="h-[17px] border-b border-[#adadad] bg-white pl-[2px] text-[11px] leading-[16px] text-[#111]">
            19 kwietnia 2017
          </div>
          <div className="flex h-[18px] bg-[#efefef]">
            {hourLabels.map((h) => (
              <div
                key={h}
                className="h-full w-[198px] shrink-0 bg-[linear-gradient(#888,#888)] bg-[length:1px_4px] bg-[position:0_100%] bg-no-repeat pl-[1px] text-[11px] leading-[15px] text-[#111]"
              >
                {h}
              </div>
            ))}
          </div>
          <div className="flex h-[12px] border-y border-[#adadad] bg-white">
            {cellIdx.map((i) => (
              <div
                key={i}
                className={`h-full w-[33px] shrink-0 border-r ${
                  i >= 18 && i < 31 ? 'border-[#6fb4f7] bg-[#3399ff]' : 'border-[#adadad]'
                }`}
              />
            ))}
          </div>
        </div>
      </div>
      <div className="flex flex-col">
        {rows.map((r, i) => (
          <div key={r.lines[0]} className="contents">
            <CalendarRow row={r} last={i === rows.length - 1} />
            {i < rows.length - 1 && <RowGap />}
          </div>
        ))}
      </div>
      <div className="flex h-[17px] shrink-0 items-stretch bg-[#f7f7f7]">
        <div className="flex w-[17px] items-center justify-center border border-black bg-[#f0f0f0]">
          <svg width="6" height="10" viewBox="0 0 6 10"><path d="M6 0v10L0 5z" /></svg>
        </div>
        <div className="ml-[1056px] w-[128px] border border-black bg-[#f0f0f0]" />
        <div className="ml-[130px] flex w-[17px] items-center justify-center border border-black bg-[#f0f0f0]">
          <svg width="6" height="10" viewBox="0 0 6 10"><path d="M0 0v10l6-5z" /></svg>
        </div>
      </div>
    </div>
  );
}

const stepIcons = [
  { d: 'M1 0h8v1H1zM5 2l4 4H1zM5 6l4 4H1zM1 11h8v1H1z', fill: '#a8a8a8', mt: 'mt-[5px]' },
  { d: 'M5 0l4 4H1zM5 4l4 4H1zM1 9h8v1H1z', fill: '#a8a8a8', mt: 'mt-[7px]' },
  { d: 'M5 2l4 4H1z', fill: '#a8a8a8', mt: 'mt-[6px]' },
  { d: 'M1 2h8L5 6z', fill: '#444', mt: 'mt-[8px]' },
  { d: 'M1 0h8L5 4zM1 4h8L5 8zM1 9h8v1H1z', fill: '#333', mt: 'mt-[6px]' },
  { d: 'M1 0h8v1H1zM1 2h8L5 6zM1 6h8L5 10zM1 11h8v1H1z', fill: '#333', mt: 'mt-[6px]' },
];

function VScroll() {
  return (
    <div className="flex w-[17px] shrink-0 flex-col items-center">
      <div className="flex h-[17px] w-full items-center justify-center border border-black bg-[#f0f0f0]">
        <svg width="10" height="6" viewBox="0 0 10 6"><path d="M0 6h10L5 0z" /></svg>
      </div>
      <div className="h-[50px] w-full border border-t-0 border-black bg-[#f0f0f0]" />
      <div className="h-[79px] w-full bg-[#f7f7f7]" />
      <div className="flex h-[17px] w-full items-center justify-center border border-black bg-[#f0f0f0]">
        <svg width="10" height="6" viewBox="0 0 10 6"><path d="M0 0h10L5 6z" /></svg>
      </div>
      <div className="mt-[2px] flex flex-col items-center">
        {stepIcons.map((s) => (
          <svg key={s.d} width="10" height="12" viewBox="0 0 10 12" className={s.mt}>
            <path d={s.d} fill={s.fill} />
          </svg>
        ))}
        <svg width="10" height="10" viewBox="0 0 10 10" className="mt-[7px]">
          <path d="M4 1h2.5v3H10v2.5H6.5V10H4V6.5H0V4h4z" fill="#3a9a0a" />
        </svg>
        <svg width="10" height="3" viewBox="0 0 10 3" className="mt-[11px]">
          <path d="M0 0h10v3H0z" fill="#c8202a" />
        </svg>
      </div>
    </div>
  );
}

const calDays: [string, string[]][] = [
  ['13', ['27', '28', '29', '30', '31', '1', '2']],
  ['14', ['3', '4', '5', '6', '7', '8', '9']],
  ['15', ['10', '11', '12', '13', '14', '15', '16']],
  ['16', ['17', '18', '19', '20', '21', '22', '23']],
  ['17', ['24', '25', '26', '27', '28', '29', '30']],
  ['18', ['1', '2', '3', '4', '5', '6', '7']],
];

function MiniCalendar() {
  return (
    <div className="flex w-[143px] shrink-0 flex-col">
      <div className="flex h-[18px] items-center justify-between border border-black bg-[#f0f0f0] px-[6px] text-[11px] text-[#111]">
        <svg width="5" height="9" viewBox="0 0 5 9"><path d="M5 0v9L0 4.5z" /></svg>
        <span>kwiecień 2017</span>
        <svg width="5" height="9" viewBox="0 0 5 9"><path d="M0 0v9l5-4.5z" /></svg>
      </div>
      <div className="h-[108px] border-b border-[#adadad] bg-white pr-[10px] text-[12px]">
        <div className="grid h-[15px] grid-cols-[13px_repeat(7,17px)] items-center text-center leading-none text-[#222]">
          <span />
          {['p', 'w', 'ś', 'c', 'p', 's', 'n'].map((d, i) => (
            <span key={i}>{d}</span>
          ))}
        </div>
        <div className="ml-[13px] h-px bg-[#adadad]" />
        {calDays.map(([wk, days], r) => (
          <div key={wk} className="grid h-[15px] grid-cols-[13px_repeat(7,17px)] items-center text-center leading-none">
            <span className="h-full border-r border-[#adadad] text-[8px] leading-[15px] text-[#333]">{wk}</span>
            {days.map((d, i) => {
              const muted = (r === 0 && i < 5) || r === 5;
              const today = r === 3 && d === '19';
              return (
                <span
                  key={i}
                  className={
                    today
                      ? 'flex h-[15px] items-center justify-center border border-[#8b1a1a] bg-[#3399ff] font-bold text-white'
                      : muted
                        ? 'text-[#808080]'
                        : 'text-black'
                  }
                >
                  {d}
                </span>
              );
            })}
          </div>
        ))}
      </div>
      <div className="mt-[3px] h-[203px] border border-[#adadad] bg-[#f0f0f0]" />
    </div>
  );
}

// --- szczegoly ---
const detailLeft = [
  { label: 'Numer dokumentu, Status', value: 'AWIPO00324/04/17', extra: 'AN', w: 'w-[115px] shrink-0' },
  { label: 'Start - Koniec', value: '2017-04-19 06:00:00', extra: '- 2017-04-19 08:10:00', w: 'w-[108px] shrink-0' },
  { label: '', value: '', extra: '-', w: 'w-[108px] shrink-0' },
  { label: '', value: '', extra: '', w: '' },
  { label: 'Rodzaj i nr dok. powiązanego', value: 'ZL', extra: '', w: '' },
  { label: 'Relacja', value: '', extra: '', w: '' },
  { label: 'Info.', value: ' AWIPO00324/04/17', extra: '', w: '' },
  { label: 'Opis', value: 'OPIS AWIZACJI, TRASA POLSKA, NR REJ WW1111', extra: '', w: '' },
];

function GrayCol({ items, w }: { items: string[]; w: string }) {
  return (
    <div className={`h-[54px] shrink-0 bg-[#808080] pl-[2px] tracking-[-0.35px] text-[#f0f0f0] ${w}`}>
      {items.map((t) => (
        <div key={t} className="h-[18px] leading-[14px]">{t}</div>
      ))}
    </div>
  );
}

function Details() {
  return (
    <div className="flex h-[153px] shrink-0 border-y border-[#adadad] bg-[#f0e9e0] pl-px text-[11px] text-[#111]">
      <div className="w-[176px] shrink-0 bg-[#808080] pl-[3px] tracking-[-0.35px] text-[#f0f0f0]">
        {detailLeft.map((d, i) => (
          <div key={i} className="h-[18px] leading-[13px] whitespace-nowrap">{d.label}</div>
        ))}
      </div>
      <div className="w-[901px] shrink-0 pl-[10px] tracking-normal">
        {detailLeft.map((d, i) => (
          <div key={i} className="flex h-[18px] leading-[13px] whitespace-pre">
            <span className={d.w}>{d.value}</span>
            {d.extra && <span>{d.extra}</span>}
          </div>
        ))}
      </div>
      <GrayCol w="w-[93px]" items={['Przypomnienie', 'Indeks 1', 'Indeks 2']} />
      <div className="w-[111px] shrink-0" />
      <GrayCol w="w-[94px]" items={['ZTW', 'Wystawił', 'Ostatnia mod.']} />
      <div className="pl-[10px] whitespace-nowrap">
        <div className="flex h-[18px] items-start pl-[2px] pt-[2px]">
          <div className="h-[8px] w-[8px] border border-black bg-white" />
        </div>
        <div className="h-[18px] leading-[14px]">MAREK BRZEZIŃSKI</div>
        <div className="h-[18px] leading-[14px]">ADMIN 2017-04-19 12:27</div>
      </div>
    </div>
  );
}

// --- pasek boczny ---
function SideBtn({ icon, children, className = '' }: { icon: ReactNode; children: ReactNode; className?: string }) {
  return (
    <div className={`flex h-[25px] w-[70px] items-center border border-black bg-[#f0f0f0] pb-[2px] pl-[4px] text-[11.5px] text-[#111] ${className}`}>
      <span className="flex w-[16px] shrink-0 justify-center">{icon}</span>
      <span className="whitespace-nowrap">{children}</span>
    </div>
  );
}

function SplitBtn({ icon, label, className = '' }: { icon: ReactNode; label: string; className?: string }) {
  return (
    <div className={`flex h-[25px] w-[70px] items-center border border-black bg-[#f0f0f0] text-[11.5px] text-[#111] ${className}`}>
      <div className="flex flex-1 items-center justify-center gap-[2px] pb-[2px]">
        {icon}
        <span>{label}</span>
      </div>
      <div className="flex h-full w-[14px] items-center justify-center border-l border-black">
        <TriDown />
      </div>
    </div>
  );
}

function Sidebar() {
  return (
    <div className="flex w-[82px] shrink-0 flex-col border-l border-[#adadad] bg-[#f0f0f0] pl-[6px] pt-[10px]">
      <SideBtn icon={sideIcons.raporty}><u>R</u>aporty</SideBtn>
      <SideBtn icon={sideIcons.podglad} className="mt-[7px]"><u>P</u>odgląd</SideBtn>
      <SideBtn icon={sideIcons.nowy} className="mt-[7px]"><u>N</u>owy</SideBtn>
      <SideBtn icon={sideIcons.edytuj} className="-mt-px"><u>E</u>dytuj</SideBtn>
      <SideBtn icon={sideIcons.usun} className="-mt-px"><u>U</u>suń</SideBtn>
      <SideBtn icon={sideIcons.status} className="mt-[7px]"><u>S</u>tatus</SideBtn>
      <SideBtn icon={sideIcons.eksport} className="mt-[6px]">Eksport</SideBtn>
      <SplitBtn icon={sideIcons.mapa} label="Mapa" className="mt-[6px]" />
      <SplitBtn icon={<SmsBubble size={17} />} label="SMS" className="-mt-px" />
      <SideBtn icon={sideIcons.odswiez} className="-ml-px mt-[31px]">O<u>d</u>śwież</SideBtn>
      <SideBtn icon={sideIcons.wyjscie} className="-ml-px mt-[7px]"><u>W</u>yjście</SideBtn>
    </div>
  );
}

function StatusCell({ w, icon, text, textClass = '' }: { w: string; icon: ReactNode; text: string; textClass?: string }) {
  return (
    <div className={`flex h-full shrink-0 items-center border-l border-[#a9bacd] pl-[2px] ${w}`}>
      {icon}
      <span className={`whitespace-nowrap text-[11px] text-[#2b3a52] ${textClass}`}>{text}</span>
    </div>
  );
}

function StatusBar() {
  return (
    <div className="flex h-[22px] shrink-0 justify-end border-t border-[#adadad] bg-linear-to-b from-[#d6e3f2] to-[#b3c6dc] pr-[10px]">
      <StatusCell
        w="w-[85px]"
        text="GPS (...)"
        textClass="ml-[5px]"
        icon={
          <svg width="14" height="18" viewBox="0 0 14 18">
            <path d="M1 1h5v6H1z" fill="#3b6fc0" />
            <path d="M8 1h5v16H8z" fill="#8cbcec" />
            <path d="M6 4h3v1H6z" fill="#555" />
            <text x="1" y="16" fontSize="9" fontWeight="700" fill="#2f8f1e" fontFamily="'Liberation Sans',sans-serif">G</text>
          </svg>
        }
      />
      <StatusCell w="w-[86px]" text="SMS (...)" textClass="ml-[2px]" icon={<SmsBubble size={17} />} />
      <StatusCell
        w="w-[155px]"
        text="magazyn : 01"
        textClass="ml-[36px]"
        icon={
          <svg width="14" height="18" viewBox="0 0 14 18">
            <path d="M1 1h9v16H1z" fill="#e9c15c" stroke="#b08d35" strokeWidth="0.5" />
            <path d="M10 9h3v8h-3z" fill="#d2d2c8" stroke="#888" strokeWidth="0.5" />
          </svg>
        }
      />
      <StatusCell
        w="w-[154px]"
        text="oddział : CE"
        textClass="ml-[44px]"
        icon={
          <svg width="10" height="18" viewBox="0 0 10 18">
            <path d="M1 1h3v3H1z" fill="#2f6fc0" />
            <path d="M2 4v10h3M2 8h3" stroke="#777" fill="none" />
            <path d="M5 6h4v3H5z" fill="#e2a51a" />
            <path d="M5 10h4v3H5z" fill="#4aa52a" />
            <path d="M5 14h4v3H5z" fill="#d62a2a" />
          </svg>
        }
      />
      <StatusCell w="w-[314px]" text="użytkownik : ADMIN : MAREK BRZEZIŃSKI" textClass="ml-[54px]" icon={<Person />} />
    </div>
  );
}

export default function App() {
  return (
    <div className="flex h-[859px] w-[1600px] flex-col overflow-hidden bg-white font-['Noto_Sans',sans-serif] text-[11px] tracking-[-0.22px]">
      <div className="flex h-[23px] shrink-0 items-center bg-white pl-[3px] pr-[20px]">
        <LogoS size={16} />
        <span className="ml-[4px] text-[12px] tracking-[-0.25px] text-[#111]">
          Rejestr awizacji pojazdów - SPEDTRANS 8 .:: WERSJA DEMONSTRACYJNA SPREDTRANS SQL ::.
        </span>
        <div className="ml-auto flex items-center">
          <svg width="11" height="7" viewBox="0 0 11 7" className="mr-[55px]">
            <path d="M0 3.5l3-3v2h5v-2l3 3-3 3v-2H3v2z" fill="#333" />
          </svg>
          <svg width="10" height="1" viewBox="0 0 10 1" className="mr-[35px]"><path d="M0 0h10v1H0z" fill="#000" /></svg>
          <svg width="10" height="10" viewBox="0 0 10 10" className="mr-[36px]">
            <path d="M0.5 2.5h7v7h-7zM2.5 2.500v-2h7v7h-2" fill="none" stroke="#000" />
          </svg>
          <svg width="10" height="10" viewBox="0 0 10 10"><path d="M0 0l10 10M10 0L0 10" stroke="#000" /></svg>
        </div>
      </div>
      <Ribbon />
      <DocStrip />
      <div className="flex min-h-0 flex-1">
        <div className="flex min-w-0 flex-1 flex-col pl-[2px] pt-[3px]">
          <Filters />
          <div className="flex h-[22px] shrink-0 items-end border-b border-black bg-white pl-[5px] text-[11px] text-[#111]">
            <div className="flex h-[19px] w-[105px] items-center justify-center border border-b-0 border-black pt-[3px]">Kalendarz graficzny</div>
            <div className="flex h-[19px] items-center pl-[3px] pt-[3px]">Rejestr awizacji</div>
          </div>
          <div className="flex min-h-0 flex-1 overflow-hidden bg-white pl-[1px] pt-[4px]">
            <Timeline />
            <VScroll />
            <div className="w-[4px] shrink-0" />
            <MiniCalendar />
          </div>
          <Details />
        </div>
        <Sidebar />
      </div>
      <StatusBar />
    </div>
  );
}
